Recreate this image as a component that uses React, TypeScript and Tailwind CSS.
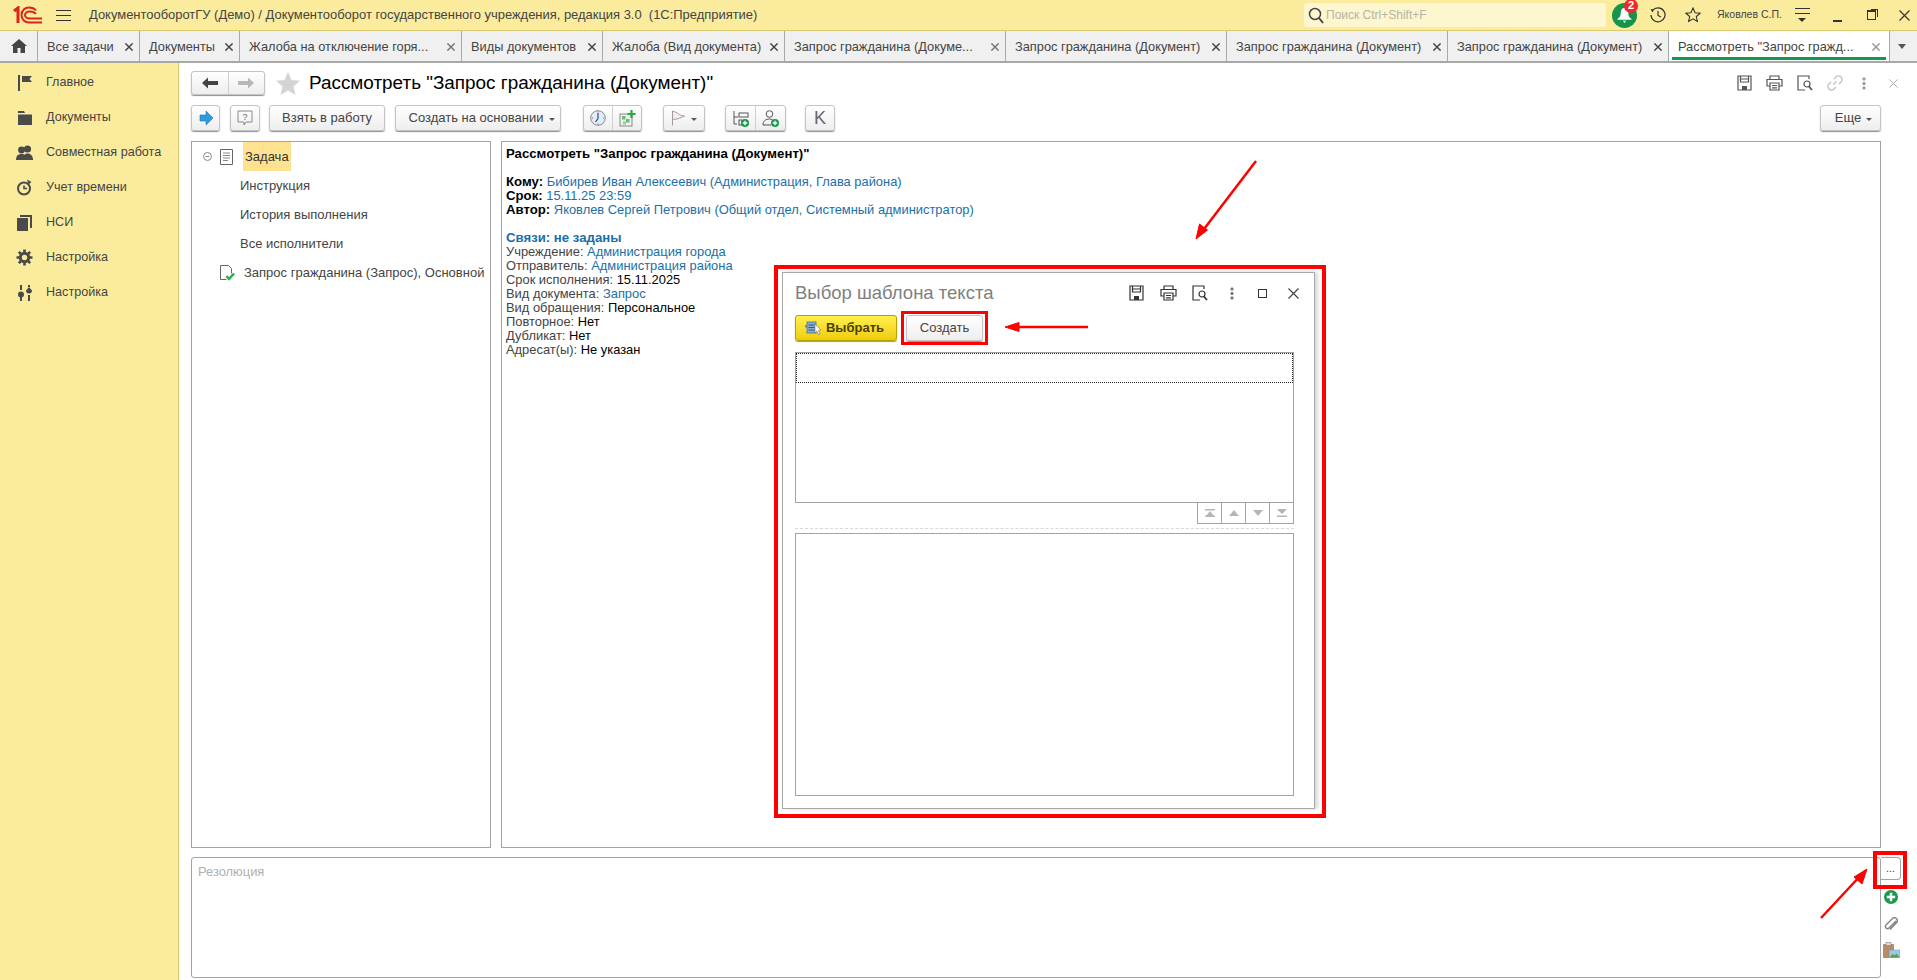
import type { ReactNode } from "react";

const btn =
	"flex items-center justify-center rounded-[3px] border border-[#c4c4c4] bg-linear-to-b from-white to-[#eeeeee] shadow-[0_1px_1px_#8f8f8f] text-[13px] text-[#444]";

const TABS = [
	{ label: "Все задачи", w: "w-[102px]" },
	{ label: "Документы", w: "w-[100px]" },
	{ label: "Жалоба на отключение горя...", w: "w-[222px]", faint: true },
	{ label: "Виды документов", w: "w-[141px]" },
	{ label: "Жалоба (Вид документа)", w: "w-[182px]" },
	{ label: "Запрос гражданина (Докуме...", w: "w-[221px]", faint: true },
	{ label: "Запрос гражданина (Документ)", w: "w-[221px]" },
	{ label: "Запрос гражданина (Документ)", w: "w-[221px]" },
	{ label: "Запрос гражданина (Документ)", w: "w-[221px]" },
];

const NAV = [
	{ label: "Главное", icon: <FlagNav /> },
	{ label: "Документы", icon: <FolderNav /> },
	{ label: "Совместная работа", icon: <PeopleNav /> },
	{ label: "Учет времени", icon: <TimerNav /> },
	{ label: "НСИ", icon: <PagesNav /> },
	{ label: "Настройка", icon: <GearNav /> },
	{ label: "Настройка", icon: <SlidersNav /> },
];

function FlagNav() {
	return (
		<svg width="16" height="16" viewBox="0 0 16 16" fill="#4a4a4a">
			<rect x="1" y="0" width="2" height="16" />
			<path d="M5 1h10l-2.5 3L15 7H5z" />
		</svg>
	);
}

function FolderNav() {
	return (
		<svg width="16" height="14" viewBox="0 0 16 14" fill="#4a4a4a">
			<path d="M1 0h6l1 2H1zM1 3.500h14V14H1z" />
		</svg>
	);
}

function PeopleNav() {
	return (
		<svg width="17" height="15" viewBox="0 0 17 15" fill="#4a4a4a">
			<circle cx="11.500" cy="4" r="3.600" />
			<path d="M7 15c0-5 2-6.500 4.500-6.500S17 10 17 15z" />
			<circle cx="5.500" cy="5" r="3.400" />
			<path d="M0 15c0-4.500 2.500-6 5.500-6s5 1.500 5 6z" />
		</svg>
	);
}

function TimerNav() {
	return (
		<svg width="17" height="17" viewBox="0 0 17 17" fill="none" stroke="#4a4a4a" strokeWidth="2">
			<circle cx="8" cy="9.500" r="6" />
			<path d="M8 6.500v3h3" strokeWidth="1.600" />
			<path d="M11 0.500l4.500 2.500-3 2.500z" fill="#4a4a4a" stroke="none" />
		</svg>
	);
}

function PagesNav() {
	return (
		<svg width="15" height="16" viewBox="0 0 15 16" fill="#4a4a4a">
			<rect x="0" y="3" width="11" height="13" />
			<path d="M3 0h12v13h-2V2H3z" />
		</svg>
	);
}

function GearNav() {
	return (
		<svg width="17" height="17" viewBox="0 0 17 17" fill="none" stroke="#4a4a4a">
			<circle cx="8.500" cy="8.500" r="4.200" strokeWidth="3" />
			<path
				d="M8.500 0.500v3M8.500 13.500v3M0.500 8.500h3M13.500 8.500h3M2.800 2.800l2.200 2.200M12 12l2.200 2.200M14.200 2.800L12 5M5 12l-2.200 2.200"
				strokeWidth="2.600"
			/>
		</svg>
	);
}

function SlidersNav() {
	return (
		<svg width="16" height="16" viewBox="0 0 16 16" fill="#4a4a4a">
			<rect x="3" y="0" width="2" height="5" />
			<circle cx="4" cy="9.500" r="3" />
			<rect x="3" y="12" width="2" height="4" />
			<rect x="11" y="0" width="2" height="2" />
			<path d="M12 2l3 3.500a3 3 0 1 1-6 0z" />
			<rect x="11" y="10" width="2" height="6" />
		</svg>
	);
}

function SaveIcon({ color = "#555" }: { color?: string }) {
	return (
		<svg width="15" height="16" viewBox="0 0 15 16" fill="none" stroke={color} strokeWidth="1.200">
			<path d="M1 1h13v14H1z" />
			<path d="M3.500 1v6h8V1M4 4h7" />
			<rect x="5" y="11" width="5" height="4" fill={color} stroke="none" />
		</svg>
	);
}

function PrintIcon({ color = "#555" }: { color?: string }) {
	return (
		<svg width="17" height="16" viewBox="0 0 17 16" fill="none" stroke={color} strokeWidth="1.200">
			<path d="M4 4V1h9v3" />
			<path d="M4 11H1V4.500h15V11h-3" />
			<path d="M4 8h9v7H4zM6 10.500h5M6 12.800h5" />
		</svg>
	);
}

function PreviewIcon({ color = "#555" }: { color?: string }) {
	return (
		<svg width="16" height="16" viewBox="0 0 16 16" fill="none" stroke={color} strokeWidth="1.200">
			<path d="M9 1H1v14h7" />
			<path d="M9 1h3v3" />
			<circle cx="10" cy="9" r="3" />
			<path d="M12 11.500l3 3.500" strokeWidth="1.800" />
		</svg>
	);
}

function DotsIcon({ color = "#777" }: { color?: string }) {
	return (
		<svg width="4" height="13" viewBox="0 0 4 13" fill={color}>
			<rect x="0.500" y="0.500" width="3" height="3" rx="1" />
			<rect x="0.500" y="5" width="3" height="3" rx="1" />
			<rect x="0.500" y="9.500" width="3" height="3" rx="1" />
		</svg>
	);
}

function CloseIcon({ size = 11, color = "#666", width = 1.200 }: { size?: number; color?: string; width?: number }) {
	return (
		<svg width={size} height={size} viewBox="0 0 11 11" fill="none" stroke={color} strokeWidth={width}>
			<path d="M0.500 0.500l10 10M10.500 0.500l-10 10" />
		</svg>
	);
}

function GreenPlus({ size = 9 }: { size?: number }) {
	return (
		<svg width={size} height={size} viewBox="0 0 10 10">
			<circle cx="5" cy="5" r="5" fill="#1b9a4b" />
			<path d="M5 2v6M2 5h6" stroke="#fff" strokeWidth="1.800" />
		</svg>
	);
}

function Tab({ label, w, faint }: { label: string; w: string; faint?: boolean }) {
	return (
		<div className={`flex h-full shrink-0 items-center border-r border-[#a8a8a8] pl-[9px] pr-[6px] pt-[1px] ${w}`}>
			<span className="flex-1 truncate whitespace-nowrap text-[12.8px] text-[#444]">{label}</span>
			<CloseIcon size={8} color={faint ? "#777" : "#444"} width={2} />
		</div>
	);
}

function Link({ children }: { children: ReactNode }) {
	return <span className="text-[#1A6FA8]">{children}</span>;
}

function Label({ children }: { children: ReactNode }) {
	return <span className="text-[#444]">{children}</span>;
}

function Strong({ children }: { children: ReactNode }) {
	return <b className="text-[13.2px]">{children}</b>;
}

function Line({ children }: { children: ReactNode }) {
	return <div className="h-[14px] whitespace-nowrap leading-[14px]">{children}</div>;
}

function MoveBtn({ d }: { d: string }) {
	return (
		<div className="flex w-[24px] items-center justify-center border-l border-[#a3a3a3]">
			<svg width="10" height="8" viewBox="0 0 10 8" fill="#b5b5b5">
				<path d={d} />
			</svg>
		</div>
	);
}

function Dialog() {
	return (
		<div className="absolute left-[774px] top-[265px] h-[553px] w-[552px] border-[4px] border-[#ff0000] bg-white">
			<div className="ml-[4px] mt-[3px] flex h-[537px] w-[533px] flex-col border border-[#a8a8a8] bg-white pl-[12px] pr-[20px] shadow-[3px_0_4px_#d8d8d8]">
				<div className="-mr-[14px] flex h-[42px] shrink-0 items-center pb-[2px]">
					<span className="flex-1 text-[18.5px] text-[#808080]">Выбор шаблона текста</span>
					<div className="flex items-center">
						<div className="flex w-[32px] justify-center"><SaveIcon color="#333" /></div>
						<div className="flex w-[32px] justify-center"><PrintIcon color="#333" /></div>
						<div className="flex w-[32px] justify-center"><PreviewIcon color="#333" /></div>
						<div className="flex w-[31px] justify-center"><DotsIcon color="#777" /></div>
						<div className="flex w-[31px] justify-center">
							<div className="h-[9px] w-[9px] border border-[#333]" />
						</div>
						<div className="flex w-[30px] justify-center"><CloseIcon color="#444" /></div>
					</div>
				</div>
				<div className="flex h-[26px] shrink-0 items-center gap-[9px]">
					<div className="flex h-[26px] w-[102px] items-center justify-center gap-[4px] rounded-[3px] border border-[#b8a000] bg-linear-to-b from-[#fff04a] to-[#f0cc00] pr-[3px] shadow-[0_1px_1px_#a99a40]">
						<svg width="17" height="15" viewBox="0 0 17 15">
							<rect x="0" y="4" width="10" height="2.500" fill="#6c93b8" />
							<rect x="2" y="1" width="9" height="11" fill="#86aed0" stroke="#4d6f8f" strokeWidth="0.800" />
							<path d="M3.500 4h6M3.500 6.500h6M3.500 9h6" stroke="#39587a" />
							<path d="M10 3l6 6-2.500.500L15 13l-1.500.800-1.500-3.500L10 12z" fill="#fff" stroke="#555" strokeWidth="0.500" />
						</svg>
						<span className="text-[13px] font-bold text-[#4b4100]">Выбрать</span>
					</div>
					<div className={`${btn} h-[26px] w-[77px]`}>Создать</div>
				</div>
				<div className="mt-[11px] flex h-[151px] shrink-0 flex-col border border-[#a3a3a3]">
					<div className="h-[30px] border border-dotted border-[#222]" />
				</div>
				<div className="-mt-px flex h-[22px] shrink-0 justify-end">
					<div className="flex border border-[#a3a3a3] border-l-0">
						<MoveBtn d="M0 0h10v1.500H0zM5 2l4 5H1zM0 6.500h10V8H0z" />
						<MoveBtn d="M5 1l5 6H0z" />
						<MoveBtn d="M0 1h10L5 7z" />
						<MoveBtn d="M0 0h10L5 5zM0 6.500h10V8H0z" />
					</div>
				</div>
				<div className="mt-[4px] h-0 shrink-0 border-t border-dashed border-[#d8d8d8]" />
				<div className="mt-[4px] h-[263px] shrink-0 border border-[#a3a3a3]" />
			</div>
		</div>
	);
}

function Annotations() {
	return (
		<>
			<div className="absolute left-[901px] top-[311px] h-[34px] w-[87px] border-[3px] border-[#ff0000]" />
			<div className="absolute left-[1873px] top-[851px] h-[38px] w-[34px] border-[4px] border-[#ff0000]" />
			<svg className="absolute left-0 top-0" width="1917" height="980" fill="none" stroke="#ff0000" strokeWidth="2.500">
				<path d="M1256 161L1201 233" />
				<path d="M1196 239l3.500-15 8 6z" fill="#ff0000" strokeWidth="1" />
				<path d="M1088 327H1012" />
				<path d="M1005 327l14-4.500v9z" fill="#ff0000" strokeWidth="1" />
				<path d="M1821 918L1862 874" />
				<path d="M1867 869l-5 15-8-7z" fill="#ff0000" strokeWidth="1" />
			</svg>
		</>
	);
}

export default function App() {
	return (
		<div className="relative flex h-[980px] w-[1917px] flex-col overflow-hidden bg-white font-['Liberation_Sans',Arial,sans-serif] text-[12.9px] text-[#333]">
			{/* title bar */}
			<div className="flex h-[31px] shrink-0 items-center border-b border-[#d9c96f] bg-[#FBEC9D]">
				<div className="ml-[13px] flex w-[29px] items-center">
					<svg width="29" height="18" viewBox="0 0 29 18" fill="none" stroke="#d9241c">
						<path d="M1 5l4-3v15" strokeWidth="3" />
						<path d="M23 4.500C21 2 18.500 1.500 16 1.500c-4 0-7.500 3-7.500 7.500s3.500 7.500 7.500 7.500h13" strokeWidth="2" />
						<path d="M23 8C21.500 6 19 5.500 16.500 5.500 14 5.500 12 7 12 9s2 3.500 4.500 3.500H29" strokeWidth="2" />
					</svg>
				</div>
				<div className="ml-[14px] flex w-[15px] flex-col gap-[4px]">
					<div className="h-px bg-[#333]" />
					<div className="h-px bg-[#333]" />
					<div className="h-px bg-[#333]" />
				</div>
				<span className="ml-[18px] flex-1 whitespace-pre text-[12.95px] text-[#444]">
					ДокументооборотГУ (Демо) / Документооборот государственного учреждения, редакция 3.0  (1С:Предприятие)
				</span>
				<div className="flex h-[24px] w-[302px] items-center rounded-[3px] bg-[#FDF6CE] pl-[4px]">
					<svg width="16" height="17" viewBox="0 0 16 17" fill="none" stroke="#444" strokeWidth="1.500">
						<circle cx="7" cy="7" r="5.500" />
						<path d="M11 11l4 5" strokeWidth="2" />
					</svg>
					<span className="ml-[2px] text-[12px] text-[#b5b5a5]">Поиск Ctrl+Shift+F</span>
				</div>
				<div className="relative ml-[6px] flex h-[25px] w-[25px] items-center justify-center rounded-full bg-[#14954a]">
					<svg width="15" height="16" viewBox="0 0 14 15" fill="#fff">
						<path d="M7 1c2.500 0 3.500 2 3.500 4.500 0 3 1 4.500 3 5.500v1H.5v-1c2-1 3-2.500 3-5.500C3.500 3 4.500 1 7 1zM5.500 13h3L7 15z" />
					</svg>
					<span className="absolute -right-[1px] -top-[4px] flex h-[14px] w-[14px] items-center justify-center rounded-full bg-[#ee2a2a] text-[11px] font-bold leading-none text-white">
						2
					</span>
				</div>
				<div className="ml-[13px]">
					<svg width="16" height="16" viewBox="0 0 16 16" fill="none" stroke="#333" strokeWidth="1.200">
						<path d="M2.500 3.500A7 7 0 1 1 1 8" />
						<path d="M0.500 2l3.500 0.500-1.500 3z" fill="#333" stroke="none" />
						<path d="M8 4v4.500l3 1.500" />
					</svg>
				</div>
				<div className="ml-[19px]">
					<svg width="16" height="16" viewBox="0 0 16 16" fill="none" stroke="#333" strokeWidth="1.100">
						<path d="M8 1l2.100 4.700 5 .5-3.800 3.300 1.100 5L8 11.900 3.600 14.500l1.100-5L.9 6.200l5-.5z" />
					</svg>
				</div>
				<span className="ml-[16px] w-[70px] whitespace-nowrap text-[10.5px] text-[#444]">Яковлев С.П.</span>
				<div className="ml-[7px] flex w-[16px] flex-col items-center gap-[4px]">
					<div className="h-px w-[15px] bg-[#333]" />
					<div className="h-px w-[15px] bg-[#333]" />
					<div className="h-0 w-0 border-x-[4px] border-t-[4px] border-x-transparent border-t-[#333]" />
				</div>
				<div className="ml-[23px] mt-[12px] h-[2px] w-[9px] bg-[#333]" />
				<div className="relative ml-[25px] h-[10px] w-[9px] border border-[#333] border-t-2 bg-transparent">
					<div className="absolute -right-[3px] -top-[3px] h-[8px] w-[7px] border-r border-t border-[#333]" />
				</div>
				<div className="ml-[23px] mr-[7px]">
					<CloseIcon size={11} color="#333" />
				</div>
			</div>

			{/* tabs */}
			<div className="flex h-[32px] shrink-0 items-stretch border-b-2 border-[#a8a8a8] bg-[#f0f0f0]">
				<div className="flex w-[38px] shrink-0 items-center justify-center border-r border-[#a8a8a8]">
					<svg width="16" height="14" viewBox="0 0 16 14" fill="#444">
						<path d="M8 0l8 7h-2v7H9.500V9h-3v5H2V7H0z" />
					</svg>
				</div>
				{TABS.map((t, i) => (
					<Tab key={i} label={t.label} w={t.w} faint={t.faint} />
				))}
				<div className="relative flex w-[221px] shrink-0 items-center border-r border-[#a8a8a8] bg-white pl-[9px] pr-[9px] pt-[1px]">
					<span className="flex-1 truncate whitespace-nowrap text-[12.8px] text-[#444]">Рассмотреть "Запрос гражд...</span>
					<CloseIcon size={8} color="#999" width={2} />
					<div className="absolute bottom-[1px] left-[3px] right-[3px] h-[3px] bg-[#0f9a4d]" />
				</div>
				<div className="flex flex-1 items-center justify-center pr-[4px]">
					<div className="h-0 w-0 border-x-[4px] border-t-[5px] border-x-transparent border-t-[#555]" />
				</div>
			</div>

			<div className="flex min-h-0 flex-1">
				{/* sidebar */}
				<div className="flex w-[179px] shrink-0 flex-col border-r border-[#d9c96f] bg-[#FBEC9D] pt-[2px] text-[12.6px]">
					{NAV.map((item, i) => (
						<div key={i} className="flex h-[35px] items-center">
							<div className="flex w-[46px] justify-center pl-[3px]">{item.icon}</div>
							<span className="whitespace-nowrap text-[#444]">{item.label}</span>
						</div>
					))}
				</div>

				{/* form */}
				<div className="flex min-w-0 flex-1 flex-col pl-[12px] pr-[36px] pt-[8px]">
					<div className="-mr-[27px] flex h-[24px] shrink-0 items-center">
						<div className={`${btn} h-[24px] w-[74px]`}>
							<div className="flex h-full flex-1 items-center justify-center border-r border-[#d0d0d0]">
								<svg width="16" height="12" viewBox="0 0 16 12" fill="#444">
									<path d="M0 6l6-5.500V4h10v4H6v3.500z" />
								</svg>
							</div>
							<div className="flex h-full flex-1 items-center justify-center">
								<svg width="16" height="12" viewBox="0 0 16 12" fill="#b8b8b8">
									<path d="M16 6l-6-5.500V4H0v4h10v3.500z" />
								</svg>
							</div>
						</div>
						<svg className="ml-[11px]" width="24" height="23" viewBox="0 0 26 25" fill="#d4d4d4">
							<path d="M13 0l3.800 8.700 9.200.9-7 6.100 2.100 9.300L13 20.100 4.900 25 7 15.700 0 9.600l9.200-.9z" />
						</svg>
						<span className="ml-[9px] flex-1 whitespace-nowrap text-[18.9px] text-black">Рассмотреть "Запрос гражданина (Документ)"</span>
						<div className="flex items-center">
							<div className="flex w-[30px] justify-center"><SaveIcon /></div>
							<div className="flex w-[31px] justify-center"><PrintIcon /></div>
							<div className="flex w-[30px] justify-center"><PreviewIcon /></div>
							<div className="flex w-[29px] justify-center">
								<svg width="16" height="16" viewBox="0 0 16 16" fill="none" stroke="#c4c4c4" strokeWidth="1.500">
									<path d="M6.500 9.500l3-3M7 4l2-2a3 3 0 0 1 5 5l-2 2M9 12l-2 2a3 3 0 0 1-5-5l2-2" />
								</svg>
							</div>
							<div className="flex w-[30px] justify-center"><DotsIcon color="#999" /></div>
							<div className="flex w-[29px] justify-center"><CloseIcon size={9} color="#aaa" /></div>
						</div>
					</div>

					<div className="mt-[10px] flex h-[26px] shrink-0 items-stretch">
						<div className={`${btn} w-[29px]`}>
							<svg width="14" height="14" viewBox="0 0 14 14">
								<path d="M1 4h6V0l7 7-7 7v-4H1z" fill="#2f9bdc" stroke="#1a75b0" strokeWidth="0.600" />
							</svg>
						</div>
						<div className={`${btn} ml-[10px] w-[30px]`}>
							<svg width="16" height="16" viewBox="0 0 16 16" fill="none" stroke="#888">
								<path d="M1 1h14v11H9l-2 3v-3H1z" />
								<text x="8" y="9.500" fontSize="9" fill="#666" stroke="none" textAnchor="middle" fontFamily="Liberation Sans">?</text>
							</svg>
						</div>
						<div className={`${btn} ml-[9px] w-[116px]`}>Взять в работу</div>
						<div className={`${btn} ml-[10px] w-[166px] gap-[6px] pl-[8px]`}>
							<span>Создать на основании</span>
							<div className="mt-[2px] h-0 w-0 border-x-[3px] border-t-[3px] border-x-transparent border-t-[#555]" />
						</div>
						<div className={`${btn} ml-[22px] w-[59px]`}>
							<div className="flex h-full flex-1 items-center justify-center border-r border-[#d0d0d0]">
								<svg width="16" height="16" viewBox="0 0 16 16">
									<circle cx="8" cy="8" r="7.300" fill="#e4edf6" stroke="#7d8b99" />
									<path d="M8 3v5.500L5.500 12" stroke="#1f4f9a" strokeWidth="1.200" fill="none" />
									<path d="M8 1.500v1M14 8h-1M3 8H2M8 13.500v1" stroke="#d04040" />
								</svg>
							</div>
							<div className="flex h-full flex-1 items-center justify-center">
								<svg width="17" height="17" viewBox="0 0 17 17">
									<rect x="1" y="4" width="12" height="12" fill="#eef2ee" stroke="#888" />
									<rect x="3" y="6" width="3.500" height="3.500" fill="#6fbb6f" />
									<rect x="7" y="9" width="3.500" height="3.500" fill="#6fbb6f" />
									<rect x="4" y="11.500" width="3" height="3" fill="#8fcf8f" />
									<path d="M12.500 0v8M8.500 4h8" stroke="#28a745" strokeWidth="2.200" />
								</svg>
							</div>
						</div>
						<div className={`${btn} ml-[21px] w-[42px] gap-[6px]`}>
							<svg width="14" height="16" viewBox="0 0 14 16" fill="none" stroke="#a99">
								<path d="M1.500 0.500v15" />
								<path d="M1.500 1.500c3 0 4 1 7 3 1 .7 3 1.500 5 1.500-2 1-4 1.500-6 2.500-2 .8-4 .8-6 .8z" fill="#f4efee" />
							</svg>
							<div className="mt-[2px] h-0 w-0 border-x-[3px] border-t-[3px] border-x-transparent border-t-[#555]" />
						</div>
						<div className={`${btn} ml-[20px] w-[61px]`}>
							<div className="flex h-full flex-1 items-center justify-center border-r border-[#d0d0d0]">
								<svg width="17" height="17" viewBox="0 0 17 17" fill="none" stroke="#555">
									<path d="M2 1v13h3M2 7h4" />
									<rect x="7" y="3" width="9" height="4" />
									<rect x="7" y="10" width="3" height="5" />
									<circle cx="13" cy="13" r="4" fill="#1b9a4b" stroke="none" />
									<path d="M13 10.800v4.400M10.800 13h4.400" stroke="#fff" strokeWidth="1.300" />
								</svg>
							</div>
							<div className="flex h-full flex-1 items-center justify-center">
								<svg width="17" height="17" viewBox="0 0 17 17" fill="none" stroke="#555">
									<circle cx="7.500" cy="4" r="3.300" />
									<path d="M1 15c0-4 2.500-6 6.500-6 1 0 2 .2 3 .7M1 15h8" />
									<circle cx="13" cy="13" r="4" fill="#1b9a4b" stroke="none" />
									<path d="M13 10.800v4.400M10.800 13h4.400" stroke="#fff" strokeWidth="1.300" />
								</svg>
							</div>
						</div>
						<div className={`${btn} ml-[19px] w-[30px] !text-[18px] !text-[#666]`}>K</div>
						<div className="flex-1" />
						<div className={`${btn} w-[61px] gap-[5px] pl-[6px]`}>
							<span>Еще</span>
							<div className="mt-[2px] h-0 w-0 border-x-[3px] border-t-[3px] border-x-transparent border-t-[#555]" />
						</div>
					</div>

					<div className="mt-[10px] flex h-[707px] shrink-0 gap-[10px]">
						{/* tree */}
						<div className="w-[300px] shrink-0 border border-[#a3a3a3] text-[13px] text-[#444]">
							<div className="flex h-[29px] items-center">
								<svg className="ml-[11px]" width="9" height="9" viewBox="0 0 9 9" fill="none" stroke="#888">
									<circle cx="4.500" cy="4.500" r="4" />
									<path d="M2.500 4.500h4" />
								</svg>
								<svg className="ml-[8px]" width="13" height="16" viewBox="0 0 13 16" fill="none" stroke="#666">
									<path d="M.5.500h12v15H.5z" />
									<path d="M3 4h7M3 6.500h7M3 9h7M3 11.500h5" stroke="#888" />
								</svg>
								<div className="ml-[10px] flex h-[29px] items-center bg-[#FFE28F] px-[2px] text-[#333]">Задача</div>
							</div>
							<div className="flex h-[29px] items-center pl-[48px]">Инструкция</div>
							<div className="flex h-[29px] items-center pl-[48px]">История выполнения</div>
							<div className="flex h-[29px] items-center pl-[48px]">Все исполнители</div>
							<div className="flex h-[29px] items-center whitespace-nowrap pl-[28px]">
								<svg width="15" height="16" viewBox="0 0 15 16" fill="none">
									<path d="M.5.500h8l3 3v5M.5.500v14h6" stroke="#666" />
									<path d="M6.500 11l2.500 3 5-5.500" stroke="#2aa84a" strokeWidth="2.400" />
								</svg>
								<span className="ml-[9px]">Запрос гражданина (Запрос), Основной</span>
							</div>
						</div>

						{/* document */}
						<div className="min-w-0 flex-1 border border-[#a3a3a3] pl-[4px] pt-[5px] text-black">
							<Line><Strong>Рассмотреть "Запрос гражданина (Документ)"</Strong></Line>
							<div className="h-[14px]" />
							<Line><Strong>Кому:</Strong> <Link>Бибирев Иван Алексеевич (Администрация, Глава района)</Link></Line>
							<Line><Strong>Срок:</Strong> <Link>15.11.25 23:59</Link></Line>
							<Line><Strong>Автор:</Strong> <Link>Яковлев Сергей Петрович (Общий отдел, Системный администратор)</Link></Line>
							<div className="h-[14px]" />
							<Line><b className="text-[13.2px] text-[#1A6FA8]">Связи: не заданы</b></Line>
							<Line><Label>Учреждение:</Label> <Link>Администрация города</Link></Line>
							<Line><Label>Отправитель:</Label> <Link>Администрация района</Link></Line>
							<Line><Label>Срок исполнения:</Label> 15.11.2025</Line>
							<Line><Label>Вид документа:</Label> <Link>Запрос</Link></Line>
							<Line><Label>Вид обращения:</Label> Персональное</Line>
							<Line><Label>Повторное:</Label> Нет</Line>
							<Line><Label>Дубликат:</Label> Нет</Line>
							<Line><Label>Адресат(ы):</Label> Не указан</Line>
						</div>
					</div>

					{/* resolution */}
					<div className="-mr-[20px] mt-[9px] flex h-[121px] shrink-0">
						<div className="flex-1 rounded-[3px] border border-[#a3a3a3] pl-[6px] pt-[4px] text-[#b0b0b0]">Резолюция</div>
						<div className="flex w-[20px] shrink-0 flex-col items-center">
							<div className="flex h-[23px] w-[20px] items-center justify-center rounded-r-[4px] border border-l-0 border-[#a3a3a3] text-[11px] text-[#444]">...</div>
							<div className="mt-[10px]"><GreenPlus size={14} /></div>
							<svg className="mt-[13px]" width="14" height="14" viewBox="0 0 14 14" fill="none" stroke="#808080" strokeWidth="1.400">
								<path d="M12 4L5 11a2 2 0 0 1-3-3l7-7a3 3 0 0 1 4 4l-7 7.500" />
							</svg>
							<svg className="mt-[11px]" width="17" height="16" viewBox="0 0 17 16">
								<rect x="0" y="2" width="11" height="14" rx="1" fill="#b98a63" />
								<rect x="3" y="0.500" width="5" height="3" fill="#ddd" stroke="#777" strokeWidth="0.500" />
								<rect x="6" y="8" width="11" height="8" fill="#9cc7ea" stroke="#6f8faa" strokeWidth="0.500" />
								<path d="M6.500 15.500l3-3.500 2 1.500 2-2 3 4z" fill="#5d9e4d" />
							</svg>
						</div>
					</div>
				</div>
			</div>

			<Dialog />
			<Annotations />
		</div>
	);
}
